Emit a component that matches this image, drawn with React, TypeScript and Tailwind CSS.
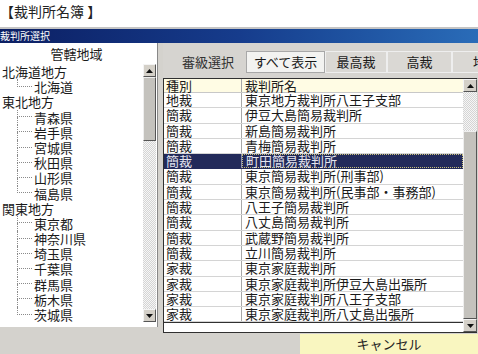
import React from "react";

const font = "font-['Noto_Sans_CJK_JP','Noto_Sans_CJK_SC',sans-serif]";

type TreeGroup = { name: string; children: string[] };
const tree: TreeGroup[] = [
  { name: "北海道地方", children: ["北海道"] },
  { name: "東北地方", children: ["青森県", "岩手県", "宮城県", "秋田県", "山形県", "福島県"] },
  { name: "関東地方", children: ["東京都", "神奈川県", "埼玉県", "千葉県", "群馬県", "栃木県", "茨城県"] },
];

const rows: [string, string][] = [
  ["地裁", "東京地方裁判所八王子支部"],
  ["簡裁", "伊豆大島簡易裁判所"],
  ["簡裁", "新島簡易裁判所"],
  ["簡裁", "青梅簡易裁判所"],
  ["簡裁", "町田簡易裁判所"],
  ["簡裁", "東京簡易裁判所(刑事部)"],
  ["簡裁", "東京簡易裁判所(民事部・事務部)"],
  ["簡裁", "八王子簡易裁判所"],
  ["簡裁", "八丈島簡易裁判所"],
  ["簡裁", "武蔵野簡易裁判所"],
  ["簡裁", "立川簡易裁判所"],
  ["家裁", "東京家庭裁判所"],
  ["家裁", "東京家庭裁判所伊豆大島出張所"],
  ["家裁", "東京家庭裁判所八王子支部"],
  ["家裁", "東京家庭裁判所八丈島出張所"],
];

const SELECTED = 4;

function Arrow({ up }: { up: boolean }) {
  return (
    <div className="w-full h-[13px] shrink-0 bg-[#d4d0c8] border border-t-[#f4f4f4] border-l-[#f4f4f4] border-r-[#555] border-b-[#555] flex items-center justify-center">
      <svg width="7" height="4" viewBox="0 0 7 4">
        {up ? <path d="M0 4 L3.5 0 L7 4 Z" fill="#111" /> : <path d="M0 0 L3.5 4 L7 0 Z" fill="#111" />}
      </svg>
    </div>
  );
}

const track = "bg-[repeating-conic-gradient(#f6f6f6_0_25%,#d4d4d4_0_50%)] bg-[length:2px_2px]";

function Thumb({ h }: { h: string }) {
  return (
    <div className={`w-full ${h} shrink-0 bg-[#c4c2bd] border border-t-[#eee] border-l-[#eee] border-r-[#555] border-b-[#555]`} />
  );
}

export default function App() {
  return (
    <div className={`w-[478px] h-[354px] bg-white overflow-hidden text-[#1a1a1a] ${font}`}>
      {/* page title */}
      <div className="h-[27px] text-[14px] leading-[22px] pl-0 text-[#222]">【裁判所名簿 】</div>
      <div className="h-[2px] bg-[#c4c4c4]" />
      {/* window title bar */}
      <div className="h-[14px] bg-gradient-to-r from-[#0c1f63] via-[#163c8c] to-[#2a6cb8] text-white text-[10px] leading-[14px] pl-0 overflow-hidden whitespace-nowrap">
        裁判所選択
      </div>
      {/* body */}
      <div className="flex h-[290px] bg-[#d4d2cd]">
        {/* left panel */}
        <div className="w-[158px] h-[284px] bg-white flex flex-col border-r border-[#888]">
          <div className="h-[21px] shrink-0 text-[13px] leading-[21px] text-center pr-[4px]">管轄地域</div>
          <div className="flex h-[258px]">
            <div className="flex-1 flex flex-col">
              {tree.map((g) => (
                <div key={g.name} className="flex flex-col">
                  <div className="h-[15.2px] text-[13px] leading-[15.2px] pl-[2px] whitespace-nowrap">{g.name}</div>
                  {g.children.map((c, i) => {
                    const last = i === g.children.length - 1;
                    return (
                      <div key={c} className="h-[15.2px] flex">
                        <div className="w-[17px] shrink-0" />
                        <div className="w-[15px] shrink-0 flex flex-col">
                          <div className="h-1/2 border-l border-b border-dotted border-[#8a8a8a]" />
                          <div className={`h-1/2 ${last ? "" : "border-l border-dotted border-[#8a8a8a]"}`} />
                        </div>
                        <div className="text-[13px] leading-[15.2px] pl-[2px] whitespace-nowrap">{c}</div>
                      </div>
                    );
                  })}
                </div>
              ))}
            </div>
            <div className={`w-[13px] mr-[1px] flex flex-col ${track}`}>
              <Arrow up />
              <Thumb h="h-[64px]" />
              <div className="flex-1" />
              <Arrow up={false} />
            </div>
          </div>
        </div>
        <div className="w-[5px] bg-[#d4d2cd]" />
        {/* right panel */}
        <div className="flex-1 flex flex-col min-w-0">
          <div className="h-[35px] shrink-0 flex items-center pl-[19px] bg-[#d6d4d0] overflow-hidden">
            <div className="text-[13px] text-[#333] w-[64px] shrink-0 mt-[3px]">審級選択</div>
            <div className="w-[79px] h-[22px] shrink-0 mt-[3px] bg-[#f3f3f1] border border-[#a8a8a8] text-[13px] leading-[20px] text-center">すべて表示</div>
            <div className="w-[62px] h-[22px] shrink-0 mt-[3px] bg-[#dad8d4] border border-[#eeeeee] text-[13px] leading-[20px] text-center">最高裁</div>
            <div className="w-[65px] h-[22px] shrink-0 mt-[3px] bg-[#dad8d4] border border-[#eeeeee] text-[13px] leading-[20px] text-center">高裁</div>
            <div className="w-[60px] h-[22px] shrink-0 mt-[3px] bg-[#dad8d4] border border-[#eeeeee] text-[13px] leading-[20px] pl-[20px] whitespace-nowrap overflow-hidden">地裁</div>
          </div>
          <div className="flex-1 flex bg-white border-t border-l border-b border-[#303030] mr-[1px]">
            <div className="flex-1 flex flex-col min-w-0">
              <div className="h-[14px] shrink-0 flex bg-[#fffce4] border-b border-[#c8c8c8] text-[13px] leading-[13px]">
                <div className="w-[78px] shrink-0 pl-[2px] border-r border-[#a8a8a8]">種別</div>
                <div className="flex-1 pl-[3px]">裁判所名</div>
              </div>
              {rows.map(([k, n], i) => {
                const sel = i === SELECTED;
                return (
                  <div
                    key={n}
                    className={`h-[15.3px] shrink-0 flex border-b text-[13px] leading-[14.3px] whitespace-nowrap ${
                      sel ? "bg-[#222a5a] text-[#e4e4ee] border-[#222a5a]" : "border-[#d4d4d4]"
                    }`}
                  >
                    <div className={`w-[78px] shrink-0 pl-[2px] border-r ${sel ? "border-[#8890b0]" : "border-[#a8a8a8]"}`}>{k}</div>
                    <div className={`flex-1 pl-[3px] ${sel ? "border border-dotted border-[#c8c07a] pl-[2px] leading-[12.3px]" : ""}`}>{n}</div>
                  </div>
                );
              })}
              <div className="border-t border-[#303030]" />
            </div>
            <div className={`w-[14px] shrink-0 flex flex-col ${track}`}>
              <Arrow up />
              <div className="h-[39px] shrink-0" />
              <div className="flex-1 bg-[#c4c2bd] border border-t-[#eee] border-l-[#eee] border-r-[#555] border-b-[#555]" />
              <Arrow up={false} />
            </div>
          </div>
        </div>
      </div>
      {/* bottom bar */}
      <div className="h-[21px] bg-[#d4d2cd] flex justify-end">
        <div className="w-[178px] h-[20px] mt-[1px] bg-[#f9f6c0] text-[13px] leading-[20px] text-center text-[#222]">キャンセル</div>
      </div>
    </div>
  );
}
